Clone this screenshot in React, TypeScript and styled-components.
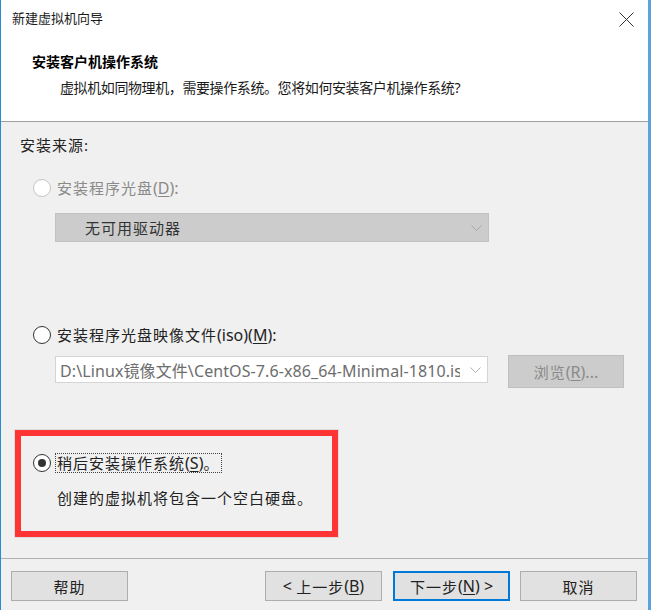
import React from "react";
import styled, { createGlobalStyle, css } from "styled-components";

const Global = createGlobalStyle`
  html, body { margin: 0; padding: 0; background: #ffffff; }
  body { font-family: "Noto Sans", "Noto Sans CJK SC", sans-serif; }
`;

const FONT = `"Noto Sans", "Noto Sans CJK SC", sans-serif`;

const Window = styled.div`
  width: 651px;
  height: 610px;
  box-sizing: border-box;
  border-left: 1px solid #2a8ad4;
  border-right: 3px solid #5aa2dc;
  display: flex;
  flex-direction: column;
  font-family: ${FONT};
  color: #1a1a1a;
  overflow: hidden;
`;

const TitleBar = styled.div`
  height: 36px;
  flex: none;
  display: flex;
  align-items: center;
  justify-content: space-between;
  padding: 0 14px 0 11px;
  background: #ffffff;
`;

const TitleText = styled.span`
  font-size: 13px;
  line-height: 36px;
  color: #1a1a1a;
`;

const CloseIcon = styled.svg`
  width: 15px;
  height: 15px;
  margin-top: 2px;
`;

const Header = styled.div`
  flex: none;
  height: 86px;
  box-sizing: border-box;
  background: #ffffff;
  border-bottom: 1px solid #a0a0a0;
  padding: 16px 0 0 31px;
`;

const HeaderTitle = styled.div`
  font-size: 14px;
  font-weight: 700;
  line-height: 20px;
  color: #000;
`;

const HeaderSub = styled.div`
  font-size: 14px;
  letter-spacing: -0.4px;
  line-height: 20px;
  margin: 6px 0 0 28px;
  color: #1a1a1a;
`;

const Body = styled.div`
  flex: 1;
  background: #f0f0f0;
  padding: 13px 19px 0 19px;
  display: flex;
  flex-direction: column;
  align-items: flex-start;
`;

const TextLine = styled.div<{ $mt?: number; $ml?: number }>`
  font-size: 15px;
  letter-spacing: 1px;
  line-height: 20px;
  height: 20px;
  margin-top: ${(p) => p.$mt ?? 0}px;
  margin-left: ${(p) => p.$ml ?? 0}px;
  white-space: nowrap;
  color: #222;
`;

const Latin = styled.span`
  letter-spacing: 0;
  font-size: 16px;
`;

const U = styled.span`
  text-decoration: underline;
  text-underline-offset: 2px;
  letter-spacing: 0;
  font-size: 16px;
`;

const OptionRow = styled.div<{ $mt: number; $pl: number }>`
  display: flex;
  align-items: center;
  height: 20px;
  margin-top: ${(p) => p.$mt}px;
  padding-left: ${(p) => p.$pl}px;
`;

const Radio = styled.span<{ $checked?: boolean; $disabled?: boolean }>`
  width: 18px;
  height: 18px;
  box-sizing: border-box;
  border-radius: 50%;
  background: #ffffff;
  border: 1px solid ${(p) => (p.$disabled ? "#c4c4c4" : "#333333")};
  display: flex;
  align-items: center;
  justify-content: center;
  flex: none;
  ${(p) =>
    p.$checked &&
    css`
      &::after {
        content: "";
        width: 8px;
        height: 8px;
        border-radius: 50%;
        background: #333333;
      }
    `}
`;

const RadioLabel = styled.span<{ $disabled?: boolean; $focused?: boolean }>`
  margin-left: ${(p) => (p.$focused ? 4 : 5)}px;
  padding: 0 ${(p) => (p.$focused ? 2 : 0)}px 0 ${(p) => (p.$focused ? 1 : 0)}px;
  font-size: 15px;
  letter-spacing: 1px;
  line-height: 18px;
  white-space: nowrap;
  color: ${(p) => (p.$disabled ? "#8a8a8a" : "#222")};
  border: 1px dotted ${(p) => (p.$focused ? "#444" : "transparent")};
`;

const Select = styled.div<{ $disabled?: boolean; $w: number; $h: number; $mt: number; $ml: number }>`
  width: ${(p) => p.$w}px;
  height: ${(p) => p.$h}px;
  margin-top: ${(p) => p.$mt}px;
  margin-left: ${(p) => p.$ml}px;
  box-sizing: border-box;
  flex: none;
  display: flex;
  align-items: center;
  background: ${(p) => (p.$disabled ? "#cccccc" : "#ffffff")};
  border: 1px solid ${(p) => (p.$disabled ? "#c2c2c2" : "#d4d4d4")};
  overflow: hidden;
`;

const SelectText = styled.span<{ $pl: number; $muted?: boolean; $cjk?: boolean }>`
  flex: 1;
  min-width: 0;
  padding-left: ${(p) => p.$pl}px;
  font-size: ${(p) => (p.$cjk ? 15 : 16)}px;
  letter-spacing: ${(p) => (p.$cjk ? 1 : 0.1)}px;
  white-space: nowrap;
  overflow: hidden;
  color: ${(p) => (p.$muted ? "#6d6d6d" : "#333")};
`;

const Chevron = styled.svg`
  width: 11px;
  height: 6px;
  flex: none;
  margin: 0 6px 0 10px;
`;

const IsoRow = styled.div`
  display: flex;
  align-items: flex-start;
  margin-top: 10px;
  margin-left: 35px;
`;

const BrowseButton = styled.div`
  width: 116px;
  height: 33px;
  box-sizing: border-box;
  margin-left: 20px;
  background: #cccccc;
  border: 1px solid #bfbfbf;
  display: flex;
  align-items: center;
  justify-content: center;
  font-size: 15px;
  letter-spacing: 1px;
  color: #8a8a8a;
`;

const Highlight = styled.div`
  margin-top: 42px;
  margin-left: -5px;
  width: 323px;
  height: 107px;
  box-sizing: border-box;
  border: 6px solid #ff3434;
  box-shadow: 0 0 0 1px #dddddd;
  padding: 17px 0 0 12px;
  display: flex;
  flex-direction: column;
  align-items: flex-start;
`;

const Footer = styled.div`
  flex: none;
  height: 52px;
  box-sizing: border-box;
  background: #f0f0f0;
  border-top: 1px solid #b0b0b0;
  padding: 12px 11px 0 10px;
  display: flex;
  align-items: flex-start;
`;

const Spacer = styled.div`
  flex: 1;
`;

const Button = styled.div<{ $primary?: boolean; $ml?: number }>`
  width: 117px;
  height: 30px;
  box-sizing: border-box;
  margin-left: ${(p) => p.$ml ?? 0}px;
  background: #e1e1e1;
  border: 1px solid ${(p) => (p.$primary ? "#0078d7" : "#adadad")};
  box-shadow: ${(p) => (p.$primary ? "inset 0 0 0 1px #0078d7" : "none")};
  display: flex;
  align-items: center;
  justify-content: center;
  font-size: 15px;
  letter-spacing: 1px;
  color: #222;
  white-space: nowrap;
`;

const ChevronDown = ({ color }: { color: string }) => (
  <Chevron viewBox="0 0 11 6">
    <polyline points="0.5,0.5 5.5,5.5 10.5,0.5" fill="none" stroke={color} strokeWidth="1" />
  </Chevron>
);

export default function App() {
  return (
    <>
      <Global />
      <Window>
        <TitleBar>
          <TitleText>新建虚拟机向导</TitleText>
          <CloseIcon viewBox="0 0 15 15">
            <line x1="0.5" y1="0.5" x2="14.5" y2="14.5" stroke="#333" strokeWidth="1" />
            <line x1="14.5" y1="0.5" x2="0.5" y2="14.5" stroke="#333" strokeWidth="1" />
          </CloseIcon>
        </TitleBar>
        <Header>
          <HeaderTitle>安装客户机操作系统</HeaderTitle>
          <HeaderSub>虚拟机如同物理机，需要操作系统。您将如何安装客户机操作系统?</HeaderSub>
        </Header>
        <Body>
          <TextLine>安装来源:</TextLine>
          <OptionRow $mt={23} $pl={13}>
            <Radio $disabled />
            <RadioLabel $disabled>
              安装程序光盘<Latin>(</Latin>
              <U>D</U>
              <Latin>):</Latin>
            </RadioLabel>
          </OptionRow>
          <Select $disabled $w={434} $h={29} $mt={15} $ml={35}>
            <SelectText $pl={29} $cjk>
              无可用驱动器
            </SelectText>
            <ChevronDown color="#a8a8a8" />
          </Select>
          <OptionRow $mt={83} $pl={13}>
            <Radio />
            <RadioLabel>
              安装程序光盘映像文件<Latin>(iso)(</Latin>
              <U>M</U>
              <Latin>):</Latin>
            </RadioLabel>
          </OptionRow>
          <IsoRow>
            <Select $w={433} $h={27} $mt={1} $ml={0}>
              <SelectText $pl={4} $muted>
                D:\Linux镜像文件\CentOS-7.6-x86_64-Minimal-1810.iso
              </SelectText>
              <ChevronDown color="#b0b0b0" />
            </Select>
            <BrowseButton>
              浏览<Latin>(</Latin>
              <U>R</U>
              <Latin>)...</Latin>
            </BrowseButton>
          </IsoRow>
          <Highlight>
            <OptionRow $mt={0} $pl={0}>
              <Radio $checked />
              <RadioLabel $focused>
                稍后安装操作系统<Latin>(</Latin>
                <U>S</U>
                <Latin>)</Latin>。
              </RadioLabel>
            </OptionRow>
            <TextLine $mt={15} $ml={24}>
              创建的虚拟机将包含一个空白硬盘。
            </TextLine>
          </Highlight>
        </Body>
        <Footer>
          <Button>帮助</Button>
          <Spacer />
          <Button>
            <Latin>&lt;&nbsp;</Latin>上一步<Latin>(</Latin>
            <U>B</U>
            <Latin>)</Latin>
          </Button>
          <Button $primary $ml={11}>
            下一步<Latin>(</Latin>
            <U>N</U>
            <Latin>)&nbsp;&gt;</Latin>
          </Button>
          <Button $ml={10}>取消</Button>
        </Footer>
      </Window>
    </>
  );
}
